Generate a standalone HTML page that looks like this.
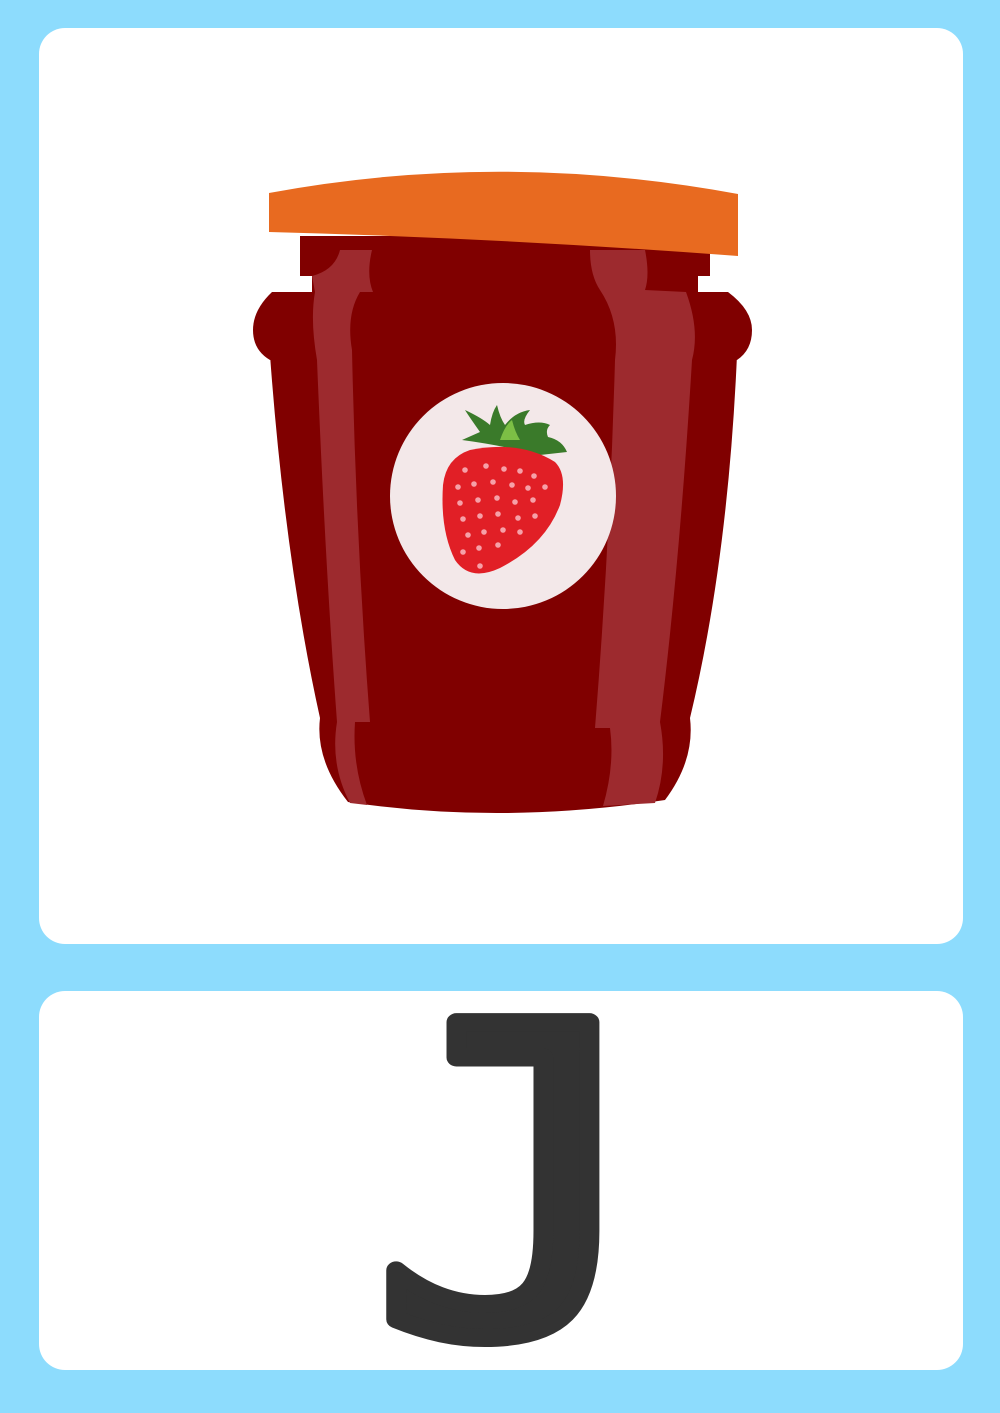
<!DOCTYPE html>
<html><head><meta charset="utf-8"><style>
html,body{margin:0;padding:0}
body{width:1000px;height:1413px;background:#8ddcfd;position:relative;overflow:hidden}
.card{position:absolute;left:39px;width:924px;background:#fff;border-radius:26px}
svg{position:absolute;left:0;top:0}
</style></head><body>
<div class="card" style="top:28px;height:916px"></div>
<div class="card" style="top:991px;height:379px"></div>
<svg width="1000" height="1413" viewBox="0 0 1000 1413">
 <path d="M300 236 L710 236 L710 276 L698 276 L698 292 L312 292 L312 276 L300 276 Z" fill="#800000"/>
 <path d="M272 292 L728 292 Q752 310 752 330 Q752 350 737 360 L270 360 Q253 350 253 330 Q253 310 272 292 Z" fill="#800000"/>
 <path d="M270 355 L737 355 Q728 560 690 718 Q695 760 665 800 Q500 825 348 802 Q315 760 320 718 Q285 560 270 355 Z" fill="#800000"/>
 <path d="M340 250 L372 250 Q366 275 373 292 L360 292 Q346 315 352 350 Q356 540 370 722 L355 722 Q352 765 367 805 L350 803 Q330 765 337 722 Q325 560 317 360 Q310 320 315 292 L312 276 Q335 270 340 250 Z" fill="#9d2a2e"/>
 <path d="M590 250 L645 250 Q650 275 645 290 L686 292 Q700 330 692 360 Q680 560 660 722 Q668 765 655 803 L603 806 Q615 765 610 728 L595 728 Q610 540 615 360 Q620 320 600 290 Q590 275 590 250 Z" fill="#9d2a2e"/>
 <path d="M269 193 Q500 150 738 194 L738 256 Q500 238 269 232 Z" fill="#e86a20"/>
 <ellipse cx="503" cy="496" rx="113" ry="113" fill="#f3e8e9"/>
 <path d="M462 440 L480 432 Q468 415 465 410 Q482 418 490 425 Q492 412 497 405 Q500 418 505 425 Q515 412 530 410 Q522 420 525 425 Q540 420 550 425 Q545 430 548 437 Q562 440 567 452 L540 455 Q500 445 462 440 Z" fill="#3a7a2a"/>
 <path d="M500 440 Q505 425 512 420 Q515 432 520 440 Z" fill="#7cbf45"/>
 <path d="M470 450 Q520 440 555 462 Q568 475 560 505 Q545 545 500 568 Q470 582 455 560 Q440 530 443 485 Q446 458 470 450 Z" fill="#e11f26"/>
 <g fill="#f6a0a8">
  <circle cx="465" cy="470" r="2.8"/><circle cx="486" cy="466" r="2.8"/><circle cx="504" cy="469" r="2.8"/><circle cx="520" cy="471" r="2.8"/><circle cx="534" cy="476" r="2.8"/>
  <circle cx="458" cy="487" r="2.8"/><circle cx="474" cy="484" r="2.8"/><circle cx="493" cy="482" r="2.8"/><circle cx="512" cy="485" r="2.8"/><circle cx="528" cy="488" r="2.8"/><circle cx="545" cy="487" r="2.8"/>
  <circle cx="460" cy="503" r="2.8"/><circle cx="478" cy="500" r="2.8"/><circle cx="497" cy="498" r="2.8"/><circle cx="515" cy="502" r="2.8"/><circle cx="533" cy="500" r="2.8"/>
  <circle cx="463" cy="519" r="2.8"/><circle cx="480" cy="516" r="2.8"/><circle cx="498" cy="514" r="2.8"/><circle cx="518" cy="518" r="2.8"/><circle cx="535" cy="516" r="2.8"/>
  <circle cx="468" cy="535" r="2.8"/><circle cx="484" cy="532" r="2.8"/><circle cx="503" cy="530" r="2.8"/><circle cx="520" cy="532" r="2.8"/>
  <circle cx="463" cy="552" r="2.8"/><circle cx="479" cy="548" r="2.8"/><circle cx="498" cy="545" r="2.8"/><circle cx="480" cy="566" r="2.8"/>
 </g>
 <text x="0" y="0" transform="translate(512 1332) scale(1.1 1)" text-anchor="middle" font-family="DejaVu Sans Mono, monospace" font-size="425" fill="#333" stroke="#333" stroke-width="18" stroke-linejoin="round">J</text>
</svg>
</body></html>
